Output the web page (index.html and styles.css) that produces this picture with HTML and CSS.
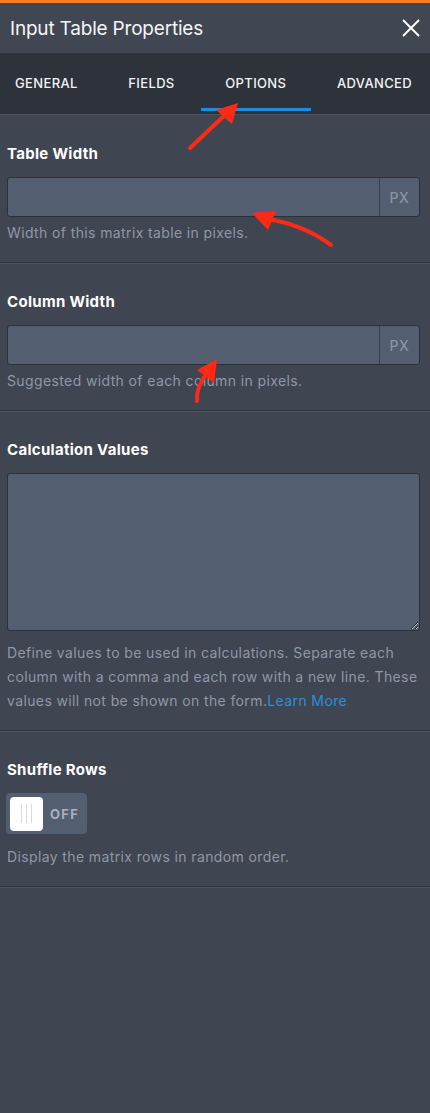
FILE: index.html
```html
<!DOCTYPE html>
<html lang="en">
<head>
    <meta charset="UTF-8">
    <meta name="viewport" content="width=device-width, initial-scale=1.0">
    <title>Input Table Properties</title>
    <link rel="stylesheet" href="styles.css">
</head>
<body>
    <div class="panel">
        <div class="panel-header">
            <h1 class="panel-title">Input Table Properties</h1>
            <button class="close-btn" aria-label="Close">
                <svg width="18" height="18" viewBox="0 0 18 18">
                    <path d="M1 1L17 17M17 1L1 17" stroke="#fff" stroke-width="2" fill="none"/>
                </svg>
            </button>
        </div>

        <div class="tabs">
            <div class="tab">GENERAL</div>
            <div class="tab">FIELDS</div>
            <div class="tab active">OPTIONS</div>
            <div class="tab">ADVANCED</div>
        </div>

        <div class="section first">
            <label class="field-label">Table Width</label>
            <div class="input-group">
                <input type="text" class="field-input">
                <span class="addon">PX</span>
            </div>
            <p class="help">Width of this matrix table in pixels.</p>
        </div>

        <div class="section">
            <label class="field-label">Column Width</label>
            <div class="input-group">
                <input type="text" class="field-input">
                <span class="addon">PX</span>
            </div>
            <p class="help">Suggested width of each column in pixels.</p>
        </div>

        <div class="section">
            <label class="field-label">Calculation Values</label>
            <textarea class="field-textarea"></textarea>
            <p class="help help-long">Define values to be used in calculations. Separate each column with a comma and each row with a new line. These values will not be shown on the form.<a href="#" class="link">Learn More</a></p>
        </div>

        <div class="section">
            <label class="field-label">Shuffle Rows</label>
            <div class="toggle">
                <div class="knob"><span></span><span></span><span></span></div>
                <span class="toggle-text">OFF</span>
            </div>
            <p class="help help-toggle">Display the matrix rows in random order.</p>
        </div>

        <!-- annotation arrows -->
        <svg class="marks" width="430" height="1113" viewBox="0 0 430 1113">
            <g stroke="#ff2a14" stroke-width="4" fill="none" stroke-linecap="round">
                <path d="M190 148L226 114"/>
                <path d="M331 245Q304 225 268 219"/>
                <path d="M197 401Q196 386 208 372"/>
            </g>
            <g fill="#ff2a14">
                <polygon points="238,103 216,110 232,124"/>
                <polygon points="252,213 276,211 268,230"/>
                <polygon points="217,359 197,370 214,383"/>
            </g>
        </svg>
    </div>
</body>
</html>
```

FILE: styles.css
```css
body {
    margin: 0;
    background: #3f4551;
    font-family: Inter, "Open Sans", sans-serif;
    color: #fff;
}

.panel {
    position: relative;
    width: 430px;
    min-height: 1113px;
    background: #3f4551;
    border-top: 3px solid #ff7b1c;
    box-sizing: border-box;
}

.panel-header {
    height: 50px;
    display: flex;
    align-items: center;
    justify-content: space-between;
    padding: 0 10px 0 10px;
    background: #404652;
}

.panel-title {
    margin: 0;
    font-size: 19px;
    font-weight: 400;
    color: #f4f5f7;
    letter-spacing: -0.2px;
}

.close-btn {
    background: none;
    border: none;
    padding: 0;
    width: 18px;
    height: 18px;
    cursor: pointer;
}

.tabs {
    height: 61px;
    display: flex;
    justify-content: space-between;
    align-items: center;
    padding: 0 18px 0 15px;
    background: #2e323b;
    border-bottom: 1px solid #4a5160;
}

.tab {
    position: relative;
    font-size: 13px;
    font-weight: 500;
    letter-spacing: 0.35px;
    color: #f2f3f5;
    height: 61px;
    line-height: 61px;
}

.tab.active::after {
    content: "";
    position: absolute;
    left: -24px;
    right: -25px;
    bottom: 3px;
    height: 3px;
    background: #1a8fe0;
}

.section {
    padding: 28px 10px 17px 7px;
    border-bottom: 1px solid #30353e;
    box-shadow: 0 1px 0 #4b5363;
    margin-bottom: 1px;
}

.section.first {
    padding-top: 29px;
}

.field-label {
    display: block;
    font-size: 15px;
    font-weight: 700;
    letter-spacing: 0.3px;
    line-height: 20px;
    color: #fff;
    margin-bottom: 13px;
}

.input-group {
    display: flex;
    height: 40px;
    border: 1px solid #2b3039;
    border-radius: 3px;
    background: #535e70;
    box-sizing: border-box;
}

.field-input {
    flex: 1;
    min-width: 0;
    border: none;
    background: transparent;
    outline: none;
    padding: 0 10px;
}

.addon {
    width: 39px;
    border-left: 1px solid #3a404b;
    display: flex;
    align-items: center;
    justify-content: center;
    font-size: 14px;
    letter-spacing: 0.5px;
    color: #8a95a6;
    font-weight: 500;
}

.help {
    margin: 4px -4px 0 0;
    font-size: 14px;
    letter-spacing: 0.38px;
    line-height: 24px;
    color: #8f98a6;
}

.help-long {
    margin-top: 10px;
}

.link {
    color: #2a8fdc;
    text-decoration: none;
}

.field-textarea {
    display: block;
    width: 100%;
    height: 158px;
    box-sizing: border-box;
    border: 1px solid #2b3039;
    border-radius: 3px;
    background: #535e70;
    resize: vertical;
    outline: none;
}

.toggle {
    display: flex;
    align-items: center;
    width: 81px;
    height: 41px;
    margin-left: -1px;
    border-radius: 4px;
    background: #535e70;
    box-sizing: border-box;
    padding: 3px 4px;
}

.knob {
    width: 33px;
    height: 34px;
    background: #fff;
    border-radius: 4px;
    display: flex;
    justify-content: center;
    align-items: center;
    gap: 4px;
}

.knob span {
    width: 1px;
    height: 19px;
    background: #d8dbe0;
}

.toggle-text {
    margin-left: 7px;
    font-size: 13px;
    font-weight: 700;
    letter-spacing: 1.3px;
    color: #a9b1be;
}

.help-toggle {
    margin-top: 11px;
}

.marks {
    position: absolute;
    top: -3px;
    left: 0;
    pointer-events: none;
}
```
